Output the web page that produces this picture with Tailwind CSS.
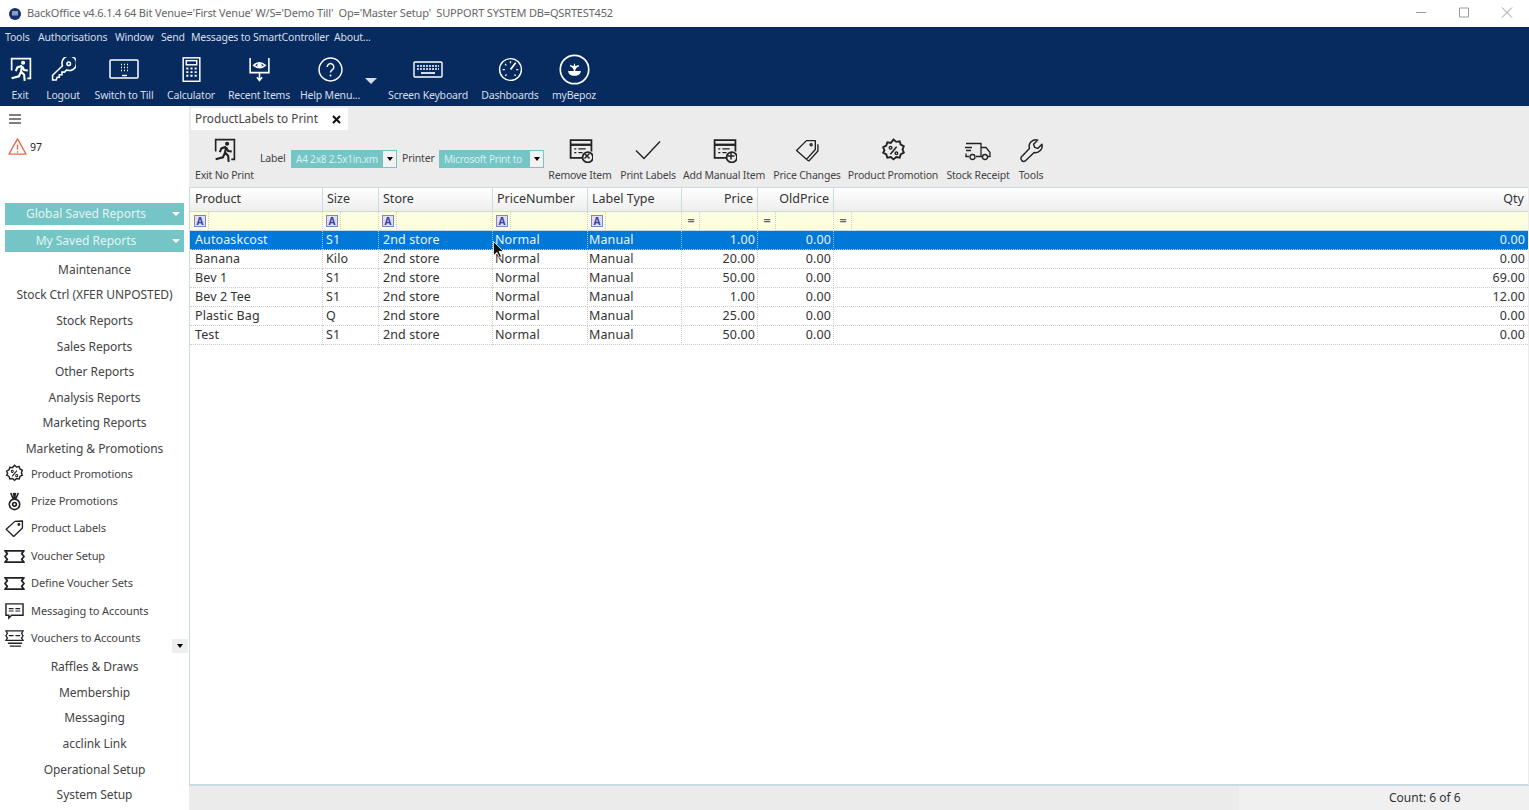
<!DOCTYPE html>
<html lang="en">
<head>
  <meta charset="UTF-8" />
  <title>BackOffice</title>
  <script src="https://cdn.jsdelivr.net/npm/@tailwindcss/browser@4"></script>
</head>
<body class="h-[810px] w-[1529px] overflow-hidden bg-white font-['Noto_Sans',sans-serif] text-[#333]">
  <svg class="hidden">
    <symbol id="run" viewBox="0 0 24 24" fill="none" stroke="currentColor" stroke-width="1.6">
      <path d="M3.500 13V1.500h18v19h-3" />
      <circle cx="14.500" cy="5.500" r="2" fill="currentColor" stroke="none" />
      <path stroke-width="2" d="M13.500 8.500l-4.500 1.500-1.500 3.500M13.500 8.500l-1 5.500 3 3 .5 6M12.500 14l-2 4.500-7 2M13.500 9l2 3.500 3.500.5" />
    </symbol>
    <symbol id="badge" viewBox="0 0 24 24" fill="none" stroke="currentColor" stroke-width="1.8">
      <path d="M12 1.500l2.600 2.200 3.300-.6 1 3.200 3 1.600-1.200 3.100 1.200 3.100-3 1.600-1 3.200-3.300-.6-2.600 2.200-2.600-2.200-3.300.6-1-3.200-3-1.600L3.300 12l-1.200-3.100 3-1.600 1-3.200 3.300.6z" />
      <path stroke-width="1.500" d="M15 8.500l-6 7" />
      <circle cx="9.200" cy="9.300" r="1.300" stroke-width="1.300" />
      <circle cx="14.800" cy="14.700" r="1.300" stroke-width="1.300" />
    </symbol>
    <symbol id="tag" viewBox="0 0 24 24" fill="none" stroke="currentColor" stroke-width="1.7" stroke-linejoin="round">
      <path d="M1.500 13L12.500 3 22 2.500 22 11.500 11 22z" />
      <circle cx="17.500" cy="7" r="1" />
    </symbol>
    <symbol id="ticket" viewBox="1 5 22 14" fill="none" stroke="currentColor" stroke-width="1.800" stroke-linejoin="round">
      <path d="M2 6h20l-2.500 3 2.500 3-2.500 3 2.500 3H2l2.500-3L2 12l2.500-3z" />
    </symbol>
    <symbol id="form" viewBox="0 0 24 24" fill="none" stroke="currentColor" stroke-width="1.700">
      <path d="M14 19H2.500V2h20v11" />
      <path d="M2.500 6.500h20" stroke-width="2.200" />
      <path d="M6 10.500h2M10 10.500h7M6 14h2M10 14h4" stroke-width="1.300" />
      <circle cx="19" cy="18.500" r="5" />
    </symbol>
  </svg>

  <!-- title bar -->
  <div class="flex h-[27px] items-center text-[#666]">
    <svg class="ml-[9px] mr-[6px] size-3" viewBox="0 0 12 12"><circle cx="6" cy="6" r="6" fill="#17306a" /><rect x="3" y="3" width="6" height="4.500" fill="#8b9ec4" /></svg>
    <div class="whitespace-pre text-[11px] tracking-[-0.17px]">BackOffice v4.6.1.4 64 Bit Venue='First Venue' W/S='Demo Till'  Op='Master Setup'  SUPPORT SYSTEM DB=QSRTEST452</div>
    <div class="ml-auto mr-px flex items-center text-[#999]">
      <svg class="h-[27px] w-[43px]" viewBox="0 0 43 27"><path d="M17 12.500h10" stroke="currentColor" /></svg>
      <svg class="h-[27px] w-[43px]" viewBox="0 0 43 27"><path d="M17.500 8h9v9h-9z" fill="none" stroke="currentColor" /></svg>
      <svg class="h-[27px] w-[43px]" viewBox="0 0 43 27"><path d="M17 7.500l10 10M27 7.500l-10 10" fill="none" stroke="currentColor" /></svg>
    </div>
  </div>

  <!-- navy header -->
  <div class="h-[79px] bg-[#072b5f] text-[#d5dde9]">
    <div class="flex h-[22px] items-center whitespace-nowrap pl-[5px] text-[10.5px] tracking-[-0.2px]">
      <span class="w-[33px]">Tools</span>
      <span class="w-[77px]">Authorisations</span>
      <span class="w-[46px]">Window</span>
      <span class="w-[30px]">Send</span>
      <span class="w-[143px]">Messages to SmartController</span>
      <span>About...</span>
    </div>
    <div class="mt-[8px] flex text-[10.5px] tracking-[-0.2px] whitespace-nowrap">
      <div class="flex w-[40px] flex-col items-center"><svg class="size-[25px] text-white"><use href="#run" /></svg><span class="mt-[6px]">Exit</span></div>
      <div class="flex w-[46px] flex-col items-center">
        <svg class="size-[25px]" viewBox="0 0 24 24" fill="none" stroke="white" stroke-width="1.500"><path d="M1.500 22v-4.500L11 8.500a7 7 0 1 1 4 4l-2 2h-2.500v2.500h-2.500v2.500H6L5 22z" /><circle cx="17" cy="6.500" r="1.700" /></svg>
        <span class="mt-[6px]">Logout</span>
      </div>
      <div class="flex w-[76px] flex-col items-center">
        <svg class="size-[25px] w-[30px]" viewBox="0 0 30 24" fill="none" stroke="white" stroke-width="1.500"><rect x="1" y="2.500" width="28" height="18" rx="1" /><path d="M12 7h1M15 7h1M18 7h1M12 10h1M15 10h1M18 10h1M12 13h1M15 13h1M18 13h1M13 18h5" stroke-width="1.500" /></svg>
        <span class="mt-[6px]">Switch to Till</span>
      </div>
      <div class="flex w-[58px] flex-col items-center">
        <svg class="size-[25px]" viewBox="0 0 24 24" fill="none" stroke="white" stroke-width="1.400"><rect x="4" y="0.800" width="16" height="22.500" /><rect x="7" y="3.500" width="10" height="4" /><path d="M7 11h2M11 11h2M15 11h2M7 14.500h2M11 14.500h2M15 14.500h2M7 18h2M11 18h2M15 18h2" stroke-width="1.800" /></svg>
        <span class="mt-[6px]">Calculator</span>
      </div>
      <div class="flex w-[78px] flex-col items-center">
        <svg class="size-[25px]" viewBox="0 0 24 24" fill="none" stroke="white" stroke-width="1.500"><path d="M3 1v14h18V1" /><path d="M6.500 8q5.500-5 11 0q-5.500 4.500-11 0z" /><circle cx="12" cy="8" r="1.500" fill="white" /><path d="M12 15v7M9.500 19.500L12 22.500l2.500-3" /></svg>
        <span class="mt-[6px]">Recent Items</span>
      </div>
      <div class="flex w-[64px] flex-col items-center">
        <svg class="size-[25px]" viewBox="0 0 24 24" fill="none" stroke="white" stroke-width="1.400"><circle cx="12" cy="12" r="11" /><path d="M8.800 9.500a3.200 3.200 0 1 1 4.800 2.800c-1 .6-1.600 1.200-1.600 2.500" /><circle cx="12" cy="17.800" r=".9" fill="white" stroke="none" /></svg>
        <span class="mt-[6px]">Help Menu...</span>
      </div>
      <div class="flex w-[18px] justify-center pt-[21px]"><div class="size-0 border-x-[6px] border-t-[6px] border-x-transparent border-t-[#d5dde9]"></div></div>
      <div class="flex w-[96px] flex-col items-center">
        <svg class="size-[25px] w-[30px]" viewBox="0 0 30 24" fill="none" stroke="white" stroke-width="1.400"><rect x="1" y="4.500" width="28" height="15" rx="1" /><path d="M4 8.500h22M4 11.500h22" stroke-dasharray="2 1" stroke-width="1.700" /><path d="M8 15.500h14" stroke-width="1.700" /></svg>
        <span class="mt-[6px]">Screen Keyboard</span>
      </div>
      <div class="flex w-[68px] flex-col items-center">
        <svg class="size-[25px]" viewBox="0 0 24 24" fill="none" stroke="white" stroke-width="1.300"><circle cx="12" cy="12" r="10.500" /><path d="M12 12l5-6.500" stroke-width="1.700" /><path d="M12 4v2M4.500 12h2M6.700 6.700l1.300 1.300M19.500 12h-2M7 18l1.200-1.200M17 18l-1.200-1.200" stroke-width="1.200" /></svg>
        <span class="mt-[6px]">Dashboards</span>
      </div>
      <div class="mt-[-3px] flex w-[60px] flex-col items-center">
        <svg class="size-[31px]" viewBox="0 0 24 24" fill="none" stroke="white" stroke-width="1.300"><circle cx="12" cy="12" r="11" /><path d="M12 7.500v6M8.500 9q3 .7 3.500 4.500 .5-3.800 3.500-4.500M7.500 13.500h9q-.5 3-4.500 3t-4.500-3z" fill="white" stroke-width=".8" /></svg>
        <span class="mt-[3px]">myBepoz</span>
      </div>
    </div>
  </div>

  <div class="flex h-[704px]">
    <!-- sidebar -->
    <aside class="w-[189px] shrink-0 text-[11.5px] text-[#444]">
      <div class="pl-[9px] pt-[7px]"><svg class="size-3" viewBox="0 0 12 12" stroke="#555" stroke-width="1.400"><path d="M0 2h12M0 6h12M0 10h12" /></svg></div>
      <div class="mt-[12px] flex h-[23px] items-start pl-[8px]">
        <svg class="size-[19px]" viewBox="0 0 20 20" fill="none" stroke="#e2694a" stroke-width="1.400"><path d="M10 2l9 16H1z" stroke-linejoin="round" /><path d="M10 8v5.500M10 15v1.500" /></svg>
        <span class="ml-[3px] mt-[3px] text-[10.5px] text-[#222]">97</span>
      </div>
      <div class="mx-[5px] mt-[43px] flex flex-col gap-[5px] text-[12px] text-[#e4f3f3]">
        <div class="relative flex h-[22px] items-center justify-center bg-[#74c6c6] pr-[17px]">Global Saved Reports<div class="absolute right-[4px] top-[9px] size-0 border-x-[4px] border-t-[4px] border-x-transparent border-t-white"></div></div>
        <div class="relative flex h-[22px] items-center justify-center bg-[#74c6c6] pr-[17px]">My Saved Reports<div class="absolute right-[4px] top-[9px] size-0 border-x-[4px] border-t-[4px] border-x-transparent border-t-white"></div></div>
      </div>
      <div class="mt-[5px] flex flex-col text-center text-[12px] tracking-[-0.05px] [&>div]:flex [&>div]:h-[25.6px] [&>div]:items-center [&>div]:justify-center">
        <div>Maintenance</div>
        <div>Stock Ctrl (XFER UNPOSTED)</div>
        <div>Stock Reports</div>
        <div>Sales Reports</div>
        <div>Other Reports</div>
        <div>Analysis Reports</div>
        <div>Marketing Reports</div>
        <div>Marketing &amp; Promotions</div>
      </div>
      <div class="relative mt-[-1.500px] flex flex-col text-[11px] tracking-[-0.1px] [&_svg]:text-[#222] [&>div]:flex [&>div]:h-[27.4px] [&>div]:items-center [&>div]:gap-[7px] [&>div]:pl-[5px]">
        <div><svg class="size-[19px]"><use href="#badge" /></svg>Product Promotions</div>
        <div>
          <svg class="size-[19px]" viewBox="0 0 20 20" fill="none" stroke="currentColor" stroke-width="1.700"><path d="M6 1l3 7M14 1l-3 7M9 1l1 6 1-6" /><circle cx="10" cy="13" r="5.500" /><circle cx="10" cy="13" r="2" /></svg>
          Prize Promotions
        </div>
        <div><svg class="size-[19px]"><use href="#tag" /></svg>Product Labels</div>
        <div><svg class="mx-[-1px] h-[15px] w-[21px]"><use href="#ticket" /></svg>Voucher Setup</div>
        <div><svg class="mx-[-1px] h-[15px] w-[21px]"><use href="#ticket" /></svg>Define Voucher Sets</div>
        <div>
          <svg class="size-[19px]" viewBox="0 0 20 20" fill="none" stroke="currentColor" stroke-width="1.500"><path d="M1 3h18v12H7l-3 3v-3H1z" /><path d="M4 8h5M11 8h5M4 10.500h5M11 10.500h5" stroke-width="1.200" /></svg>
          Messaging to Accounts
        </div>
        <div>
          <svg class="size-[19px]" viewBox="0 0 20 20" fill="none" stroke="currentColor" stroke-width="1.400"><path d="M1 2h18l-1.500 2.500L19 7l-1.500 2.500L19 12H1l1.500-2.500L1 7l1.500-2.500z" /><path d="M3 15h15M5 18h12M4 7h5M11 7h5" /></svg>
          Vouchers to Accounts
        </div>
        <div class="absolute bottom-[-1px] right-[1px] !h-[14px] !w-[16px] justify-center !pl-0 bg-[#eee]"><div class="size-0 border-x-[3.500px] border-t-[4px] border-x-transparent border-t-black"></div></div>
      </div>
      <div class="mt-[2.500px] flex flex-col text-[12px] tracking-[-0.05px] [&>div]:flex [&>div]:h-[25.6px] [&>div]:items-center [&>div]:justify-center">
        <div>Raffles &amp; Draws</div>
        <div>Membership</div>
        <div>Messaging</div>
        <div>acclink Link</div>
        <div>Operational Setup</div>
        <div>System Setup</div>
      </div>
    </aside>

    <!-- main panel -->
    <main class="relative flex min-w-0 flex-1 flex-col bg-[#ececec]">
      <div class="ml-[2px] mt-[2px] flex h-[22px] w-[157px] items-center justify-between bg-white pl-[4px] pr-[7px] text-[11.8px] text-[#444]">
        ProductLabels to Print
        <svg class="size-[9px]" viewBox="0 0 9 9" stroke="#111" stroke-width="2"><path d="M1 1l7 7M8 1L1 8" /></svg>
      </div>

      <div class="flex h-[57px] whitespace-nowrap text-[10.5px] tracking-[-0.2px] text-[#444]">
        <div class="flex w-[71px] flex-col items-center pt-[8px]"><svg class="size-[25px] text-[#222]"><use href="#run" /></svg><span class="mt-[5px]">Exit No Print</span></div>
        <div class="flex items-center self-start pt-[20px]">
          <span class="w-[31px]">Label</span>
          <div class="flex h-[18px] w-[106px] items-center justify-between bg-[#74c6c6] pl-[5px] pr-[1px] text-[10px] text-[#d9f0f0]"><span class="w-[87px] overflow-hidden">A4 2x8 2.5x1in.xm</span><div class="flex h-[16px] w-[13px] shrink-0 items-center justify-center bg-[#f2f2f2]"><div class="size-0 border-x-[3.500px] border-t-[4px] border-x-transparent border-t-black"></div></div></div>
          <span class="w-[42px] pl-[5px]">Printer</span>
          <div class="flex h-[18px] w-[105px] items-center justify-between bg-[#74c6c6] pl-[5px] pr-[1px] text-[10px] text-[#d9f0f0]"><span class="w-[86px] overflow-hidden">Microsoft Print to</span><div class="flex h-[16px] w-[13px] shrink-0 items-center justify-center bg-[#f2f2f2]"><div class="size-0 border-x-[3.500px] border-t-[4px] border-x-transparent border-t-black"></div></div></div>
        </div>
        <div class="ml-px flex w-[70px] flex-col items-center pt-[8px]">
          <div class="relative size-[25px] text-[#222]"><svg class="size-[25px]"><use href="#form" /></svg><svg class="absolute bottom-[2px] right-[1px] size-[10px]" viewBox="0 0 10 10" stroke="#222" stroke-width="1.500"><path d="M2.500 2.500l5 5M7.500 2.500l-5 5" /></svg></div>
          <span class="mt-[5px]">Remove Item</span>
        </div>
        <div class="flex w-[66px] flex-col items-center pt-[8px]">
          <svg class="size-[25px] w-[30px]" viewBox="0 0 30 24" fill="none" stroke="#222" stroke-width="1.400"><path d="M3 12l8 8L27 3" /></svg>
          <span class="mt-[5px]">Print Labels</span>
        </div>
        <div class="flex w-[86px] flex-col items-center pt-[8px]">
          <div class="relative size-[25px] text-[#222]"><svg class="size-[25px]"><use href="#form" /></svg><svg class="absolute bottom-[2px] right-[1px] size-[10px]" viewBox="0 0 10 10" stroke="#222" stroke-width="1.500"><path d="M5 1.500v7M1.500 5h7" /></svg></div>
          <span class="mt-[5px]">Add Manual Item</span>
        </div>
        <div class="flex w-[80px] flex-col items-center pt-[8px]">
          <svg class="size-[25px] text-[#222]" viewBox="0 0 24 24" fill="none" stroke="currentColor" stroke-width="1.300" stroke-linejoin="round"><path d="M1.500 12L11 2.500h8.500V11l-8.500 9.500z" /><circle cx="15.500" cy="6.500" r="1" /><path d="M22 6v6.500L13.500 22l-2-1" /></svg>
          <span class="mt-[5px]">Price Changes</span>
        </div>
        <div class="flex w-[92px] flex-col items-center pt-[8px]"><svg class="size-[25px] text-[#222]"><use href="#badge" /></svg><span class="mt-[5px]">Product Promotion</span></div>
        <div class="flex w-[78px] flex-col items-center pt-[8px]">
          <svg class="size-[25px] w-[28px]" viewBox="0 0 28 24" fill="none" stroke="#222" stroke-width="1.300"><path d="M2 5h15v13H12M5 18H2v-3M1 9h7M2 12h5" /><path d="M17 9h5l4 5v4h-2M17 18h1" /><circle cx="8.500" cy="18.500" r="2.500" /><circle cx="21" cy="18.500" r="2.500" /></svg>
          <span class="mt-[5px]">Stock Receipt</span>
        </div>
        <div class="flex w-[28px] flex-col items-center pt-[8px]">
          <svg class="size-[25px]" viewBox="0 0 24 24" fill="none" stroke="#222" stroke-width="1.400" stroke-linejoin="round"><path d="M22 6l-4 4-3-1-1-3 4-4a6.500 6.500 0 0 0-8 8L2 18.500A2.800 2.800 0 0 0 6 22l8.500-8a6.500 6.500 0 0 0 7.500-8z" /></svg>
          <span class="mt-[5px]">Tools</span>
        </div>
      </div>

      <!-- grid -->
      <div class="mr-px flex flex-1 flex-col border border-t-0 border-[#c8dae2] border-r-0 bg-white text-[12.5px] text-[#333]">
        <div class="grid h-[25px] grid-cols-[132px_56px_114px_95px_94px_76px_76px_1fr] border-y border-[#c8dae2] bg-linear-to-b from-white to-[#eeeeee] pl-px [&>div]:flex [&>div]:items-center [&>div]:border-r [&>div]:border-[#c8dae2] [&>div]:px-[4px]">
          <div>Product</div><div>Size</div><div>Store</div><div>PriceNumber</div><div>Label Type</div><div class="justify-end">Price</div><div class="justify-end">OldPrice</div><div class="justify-end !border-r-0">Qty</div>
        </div>
        <div class="grid h-[19px] grid-cols-[132px_56px_114px_95px_94px_76px_76px_1fr] border-b border-[#c8dae2] bg-[#fdfde0] pl-px font-bold text-[#666] [&>div]:flex [&>div]:items-center [&>div]:border-r [&>div]:border-dotted [&>div]:border-[#ccc] [&>div]:pl-[3px]">
          <div><span class="flex size-[12px] items-center justify-center border border-[#7f84c8] bg-[#dfe0f5] text-[10px] leading-none text-[#3a3fa0]">A</span><span class="ml-[2px] h-full border-l border-dotted border-[#ccc]"></span></div>
          <div><span class="flex size-[12px] items-center justify-center border border-[#7f84c8] bg-[#dfe0f5] text-[10px] leading-none text-[#3a3fa0]">A</span><span class="ml-[2px] h-full border-l border-dotted border-[#ccc]"></span></div>
          <div><span class="flex size-[12px] items-center justify-center border border-[#7f84c8] bg-[#dfe0f5] text-[10px] leading-none text-[#3a3fa0]">A</span><span class="ml-[2px] h-full border-l border-dotted border-[#ccc]"></span></div>
          <div><span class="flex size-[12px] items-center justify-center border border-[#7f84c8] bg-[#dfe0f5] text-[10px] leading-none text-[#3a3fa0]">A</span><span class="ml-[2px] h-full border-l border-dotted border-[#ccc]"></span></div>
          <div><span class="flex size-[12px] items-center justify-center border border-[#7f84c8] bg-[#dfe0f5] text-[10px] leading-none text-[#3a3fa0]">A</span><span class="ml-[2px] h-full border-l border-dotted border-[#ccc]"></span></div>
          <div><span class="w-[12px] text-center">=</span><span class="ml-[2px] h-full border-l border-dotted border-[#ccc]"></span></div>
          <div><span class="w-[12px] text-center">=</span><span class="ml-[2px] h-full border-l border-dotted border-[#ccc]"></span></div>
          <div class="!border-r-0"><span class="w-[12px] text-center">=</span><span class="ml-[2px] h-full border-l border-dotted border-[#ccc]"></span></div>
        </div>
        <div class="grid h-[19px] grid-cols-[132px_56px_114px_95px_94px_76px_76px_1fr] border-b border-dotted border-[#ccc] bg-[#0078d7] pl-px tracking-[0.1px] text-[#e8f3fc] [&>div]:flex [&>div]:items-center [&>div]:border-r [&>div]:border-dotted [&>div]:border-[#9cc8ee] [&>div]:px-[4px]">
          <div>Autoaskcost</div><div class="!px-[3px]">S1</div><div>2nd store</div><div class="!px-[2px]">Normal</div><div class="!px-[1px]">Manual</div><div class="justify-end !pr-[2px]">1.00</div><div class="justify-end !pr-[2px]">0.00</div><div class="justify-end !border-r-0 !pr-[3px]">0.00</div>
        </div>
        <div class="grid h-[19px] grid-cols-[132px_56px_114px_95px_94px_76px_76px_1fr] border-b border-dotted border-[#ccc] pl-px tracking-[0.1px] [&>div]:flex [&>div]:items-center [&>div]:border-r [&>div]:border-dotted [&>div]:border-[#ccc] [&>div]:px-[4px]">
          <div>Banana</div><div class="!px-[3px]">Kilo</div><div>2nd store</div><div class="!px-[2px]">Normal</div><div class="!px-[1px]">Manual</div><div class="justify-end !pr-[2px]">20.00</div><div class="justify-end !pr-[2px]">0.00</div><div class="justify-end !border-r-0 !pr-[3px]">0.00</div>
        </div>
        <div class="grid h-[19px] grid-cols-[132px_56px_114px_95px_94px_76px_76px_1fr] border-b border-dotted border-[#ccc] pl-px tracking-[0.1px] [&>div]:flex [&>div]:items-center [&>div]:border-r [&>div]:border-dotted [&>div]:border-[#ccc] [&>div]:px-[4px]">
          <div>Bev 1</div><div class="!px-[3px]">S1</div><div>2nd store</div><div class="!px-[2px]">Normal</div><div class="!px-[1px]">Manual</div><div class="justify-end !pr-[2px]">50.00</div><div class="justify-end !pr-[2px]">0.00</div><div class="justify-end !border-r-0 !pr-[3px]">69.00</div>
        </div>
        <div class="grid h-[19px] grid-cols-[132px_56px_114px_95px_94px_76px_76px_1fr] border-b border-dotted border-[#ccc] pl-px tracking-[0.1px] [&>div]:flex [&>div]:items-center [&>div]:border-r [&>div]:border-dotted [&>div]:border-[#ccc] [&>div]:px-[4px]">
          <div>Bev 2 Tee</div><div class="!px-[3px]">S1</div><div>2nd store</div><div class="!px-[2px]">Normal</div><div class="!px-[1px]">Manual</div><div class="justify-end !pr-[2px]">1.00</div><div class="justify-end !pr-[2px]">0.00</div><div class="justify-end !border-r-0 !pr-[3px]">12.00</div>
        </div>
        <div class="grid h-[19px] grid-cols-[132px_56px_114px_95px_94px_76px_76px_1fr] border-b border-dotted border-[#ccc] pl-px tracking-[0.1px] [&>div]:flex [&>div]:items-center [&>div]:border-r [&>div]:border-dotted [&>div]:border-[#ccc] [&>div]:px-[4px]">
          <div>Plastic Bag</div><div class="!px-[3px]">Q</div><div>2nd store</div><div class="!px-[2px]">Normal</div><div class="!px-[1px]">Manual</div><div class="justify-end !pr-[2px]">25.00</div><div class="justify-end !pr-[2px]">0.00</div><div class="justify-end !border-r-0 !pr-[3px]">0.00</div>
        </div>
        <div class="grid h-[19px] grid-cols-[132px_56px_114px_95px_94px_76px_76px_1fr] border-b border-dotted border-[#ccc] pl-px tracking-[0.1px] [&>div]:flex [&>div]:items-center [&>div]:border-r [&>div]:border-dotted [&>div]:border-[#ccc] [&>div]:px-[4px]">
          <div>Test</div><div class="!px-[3px]">S1</div><div>2nd store</div><div class="!px-[2px]">Normal</div><div class="!px-[1px]">Manual</div><div class="justify-end !pr-[2px]">50.00</div><div class="justify-end !pr-[2px]">0.00</div><div class="justify-end !border-r-0 !pr-[3px]">0.00</div>
        </div>
      </div>

      <!-- status bar -->
      <div class="flex h-[25px] shrink-0 border-t border-[#c8dae2] text-[12px] text-[#333]">
        <div class="h-full w-[1050px] bg-[#ebebeb]"></div>
        <div class="flex flex-1 items-center bg-[#f0f0f0] pl-[150px]">Count: 6 of 6</div>
      </div>

      <!-- mouse pointer -->
      <svg class="absolute left-[304px] top-[135px] h-[17px] w-[11px]" viewBox="0 0 11 17"><path d="M.5.500v14l3.500-3 2.500 5 2-1-2.500-5h4.500z" fill="#111" stroke="white" stroke-width=".8" /></svg>
    </main>
  </div>
</body>
</html>
